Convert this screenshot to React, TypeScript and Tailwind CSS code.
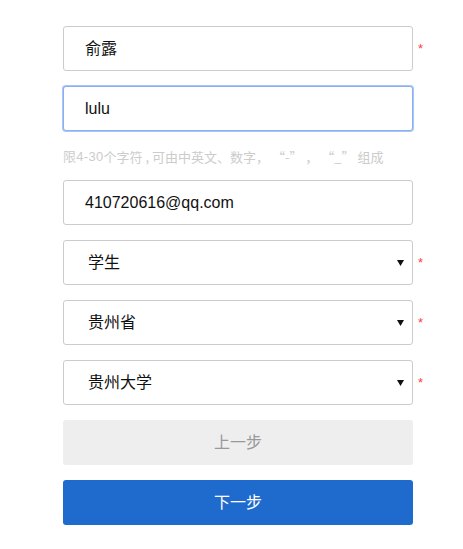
import React from 'react';

const fontStack = { fontFamily: '"Liberation Sans", "Noto Sans CJK SC", sans-serif' };
const cjkStack = { fontFamily: '"Noto Sans CJK SC", "Liberation Sans", sans-serif' };

const Star = ({ show = true }: { show?: boolean }) => (
  <span className={`ml-[5px] w-[10px] text-[13px] leading-none text-[#ff4040] ${show ? '' : 'invisible'}`}>*</span>
);

const TextField = ({ value, focused = false, required = false }: { value: string; focused?: boolean; required?: boolean }) => (
  <div className="flex items-center">
    <div
      className={`flex h-[45px] w-[350px] items-center rounded-[3px] border bg-white pl-[21px] text-[16px] text-[#111] ${
        focused ? 'border-[#8ab0f0] ring-1 ring-[#a9c4f5]' : 'border-[#cccccc]'
      }`}
    >
      {value}
    </div>
    <Star show={required} />
  </div>
);

const SelectField = ({ value }: { value: string }) => (
  <div className="flex items-center">
    <div className="flex h-[45px] w-[350px] items-center justify-between rounded-[3px] border border-[#cccccc] bg-white pl-[24px] pr-[8px] text-[16px] text-[#111]">
      <span>{value}</span>
      <svg width="7" height="6" viewBox="0 0 7 6" className="mt-[1px]">
        <path d="M0 0h7L3.5 6z" fill="#111" />
      </svg>
    </div>
    <Star />
  </div>
);

export default function App() {
  return (
    <div className="min-h-screen bg-white pl-[63px] pt-[26px]" style={fontStack}>
      <div className="flex flex-col">
        <TextField value="俞露" required />
        <div className="mt-[15px]">
          <TextField value="lulu" focused />
        </div>
        <div className="flex h-[49px] items-center whitespace-pre pt-[3px] text-[13px] text-[#cccccc]">
          <span className="tracking-[0.3px]">限4-30</span>
          <span style={cjkStack}>个字符 , 可由中英文、数字， “-” ， “_” 组成</span>
        </div>
        <TextField value="410720616@qq.com" />
        <div className="mt-[15px] flex flex-col gap-[15px]">
          <SelectField value="学生" />
          <SelectField value="贵州省" />
          <SelectField value="贵州大学" />
          <button className="h-[45px] w-[350px] rounded-[3px] bg-[#eeeeee] text-[16px] text-[#999999]">上一步</button>
          <button className="h-[45px] w-[350px] rounded-[3px] bg-[#1f6bcd] text-[16px] text-white">下一步</button>
        </div>
      </div>
    </div>
  );
}
